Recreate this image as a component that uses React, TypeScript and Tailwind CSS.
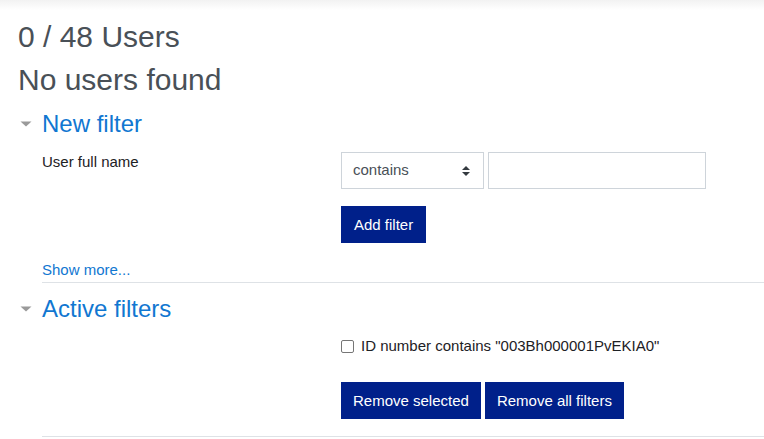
import React from 'react';

const Caret = () => (
  <svg width="12" height="6" viewBox="0 0 12 6" className="shrink-0">
    <path d="M0.5 0.5 L11.5 0.5 L6 5.5 Z" fill="#9a9a9a" />
  </svg>
);

const SectionHeading = ({ title }: { title: string }) => (
  <div className="flex items-center">
    <div className="w-[24px] pl-[2px]">
      <Caret />
    </div>
    <h3 className="text-[24px] leading-[29px] text-[#1177d1]">{title}</h3>
  </div>
);

const Button = ({ children }: { children: React.ReactNode }) => (
  <button className="h-[37px] px-[12px] bg-[#00208a] text-white text-[15px] leading-[22px] whitespace-nowrap">
    {children}
  </button>
);

const App = () => {
  return (
    <div className="w-[764px] h-[439px] overflow-hidden bg-white font-['Liberation_Sans',Arial,sans-serif]">
      <div className="h-[10px] bg-gradient-to-b from-[#f2f2f2] to-white" />
      <div className="pl-[18px]">
        <h2 className="mt-[9px] text-[30px] leading-[36px] text-[#495057]">0 / 48 Users</h2>
        <h2 className="mt-[7px] text-[30px] leading-[36px] text-[#495057]">No users found</h2>

        <div className="mt-[11px]">
          <SectionHeading title="New filter" />
        </div>

        <div className="ml-[24px] mt-[14px]">
          <div className="flex">
            <label className="w-[299px] text-[15px] leading-[20px] text-[#1d2125]">User full name</label>
            <div className="flex flex-col">
              <div className="flex gap-[4px]">
                <div className="w-[143px] h-[37px] border border-[#ced4da] flex items-center justify-between pl-[11px] pr-[13px] text-[15px] text-[#495057]">
                  <span>contains</span>
                  <svg width="8" height="12" viewBox="0 0 8 12">
                    <path d="M0 5 L4 1 L8 5 Z" fill="#343a40" />
                    <path d="M0 7 L4 11 L8 7 Z" fill="#343a40" />
                  </svg>
                </div>
                <input type="text" className="w-[218px] h-[37px] border border-[#ced4da] outline-none" />
              </div>
              <div className="mt-[17px]">
                <Button>
                  <span className="px-[1px]">Add filter</span>
                </Button>
              </div>
            </div>
          </div>
          <div className="mt-[15px]">
            <a className="text-[15px] leading-[23px] text-[#1177d1]">Show more...</a>
          </div>
          <hr className="border-0 border-t border-[#dee2e6]" />
        </div>

        <div className="mt-[11px]">
          <SectionHeading title="Active filters" />
        </div>

        <div className="ml-[24px] mt-[11px]">
          <div className="pl-[299px]">
            <label className="flex items-center gap-[7px] text-[15px] leading-[23px] text-[#1d2125]">
              <input
                type="checkbox"
                className="appearance-none w-[13px] h-[13px] border border-[#767676] rounded-[2px] bg-white mt-[2px]"
              />
              <span>ID number contains "003Bh000001PvEKIA0"</span>
            </label>
            <div className="mt-[25px] flex gap-[4px]">
              <Button>Remove selected</Button>
              <Button>Remove all filters</Button>
            </div>
          </div>
          <hr className="mt-[17px] border-0 border-t border-[#dee2e6]" />
        </div>
      </div>
    </div>
  );
};

export default App;
